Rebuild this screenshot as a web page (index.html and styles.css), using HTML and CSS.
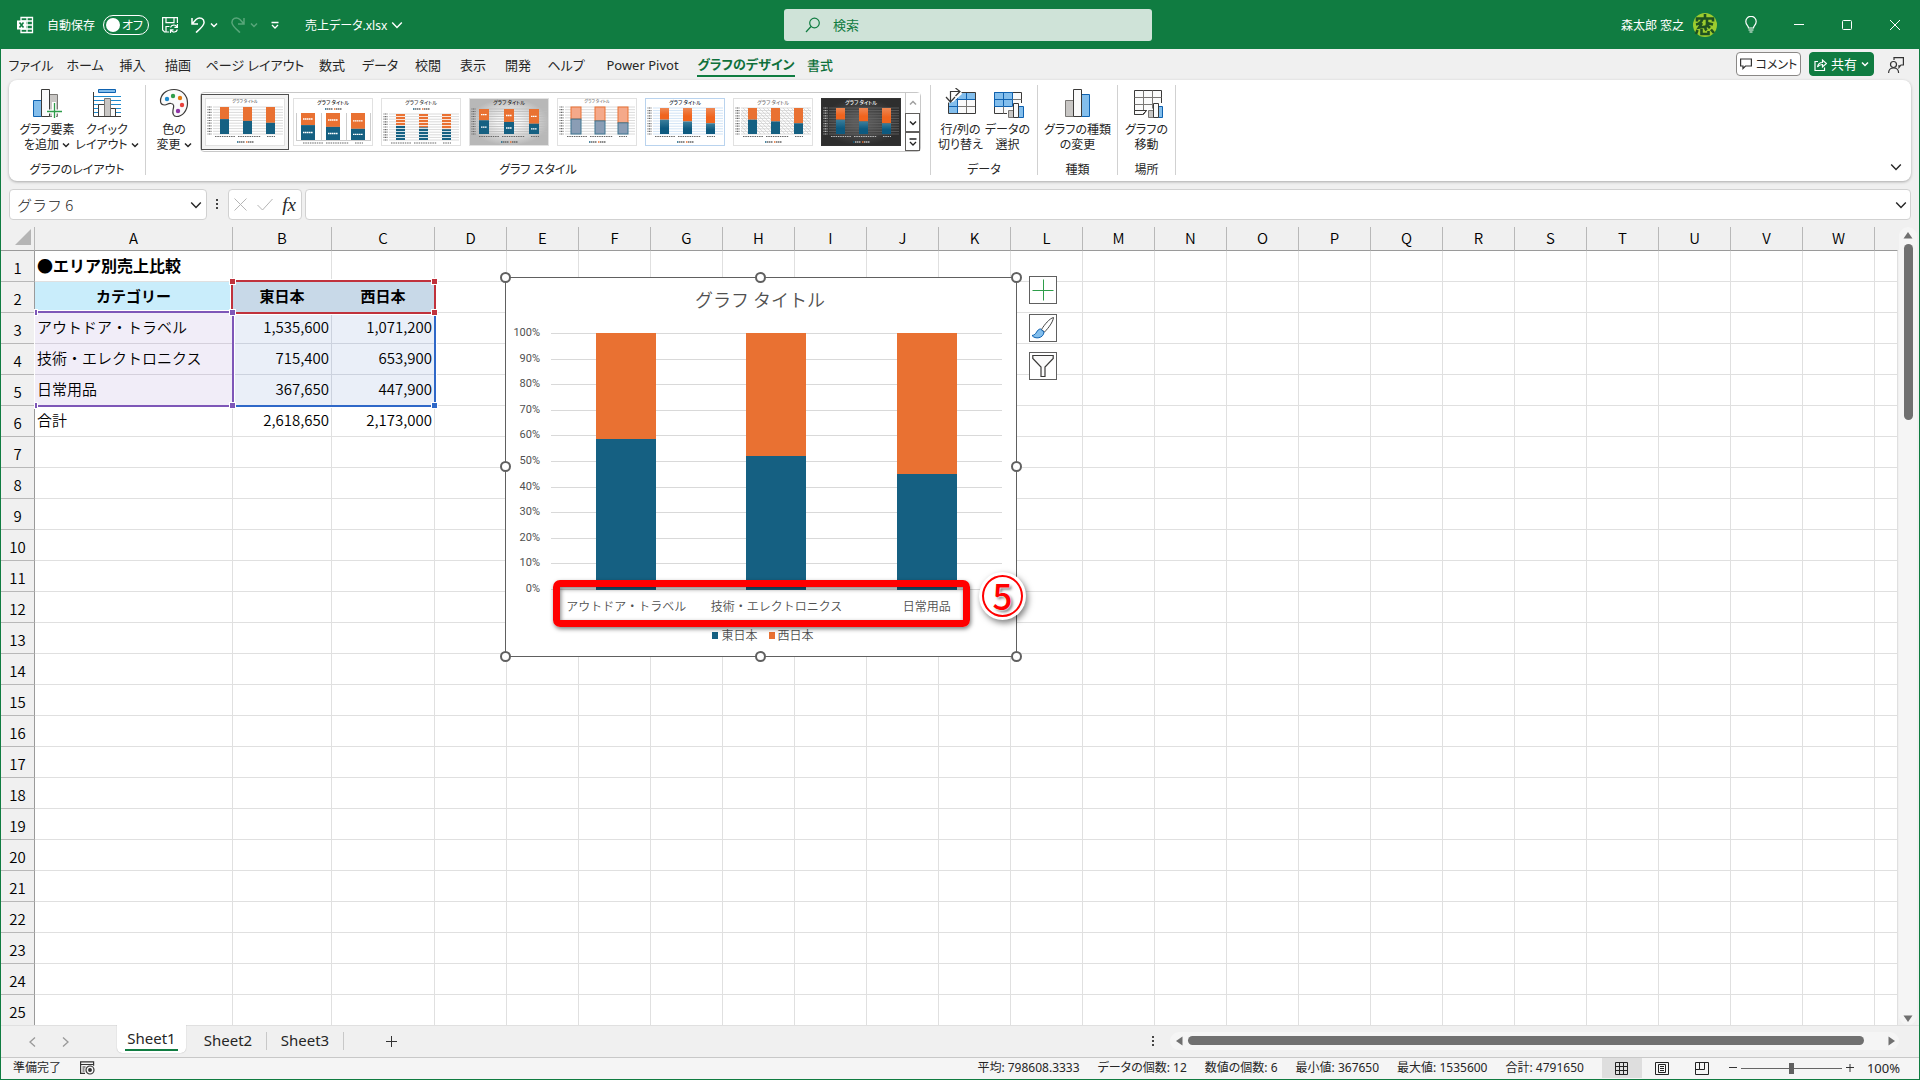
FILE: index.html
```html
<!DOCTYPE html>
<html lang="ja">
<head>
  <meta charset="UTF-8">
  <meta name="viewport" content="width=device-width, initial-scale=1.0">
  <title>売上データ.xlsx - Excel</title>
  <link rel="stylesheet" href="styles.css">
</head>
<body>
  <svg class="defs" width="0" height="0" aria-hidden="true">
    <symbol id="chev" viewBox="0 0 10 10"><path d="M1 3l4 4 4-4" fill="none" stroke="currentColor" stroke-width="1.2"/></symbol>
    <symbol id="chev-small" viewBox="0 0 8 8"><path d="M1 2.500l3 3 3-3" fill="none" stroke="currentColor" stroke-width="1.500"/></symbol>
  </svg>

  <header class="titlebar">
    <div class="quick">
      <svg class="excel-icon" viewBox="0 0 18 18" width="18" height="18">
        <path d="M5 1.5h11.5v15H5zM5 5h11.5M5 9h11.5M5 13h11.5M11 1.5v15" fill="none" stroke="#fff" stroke-width="1.3"/>
        <path d="M1 4.500h9v9H1z" fill="#fff"/>
        <path d="M3.500 6.500l4 5M7.500 6.500l-4 5" stroke="#107c41" stroke-width="1.600"/>
      </svg>
      <label class="autosave">自動保存
        <span class="toggle"><input type="checkbox"><span>オフ</span></span>
      </label>
      <button class="plain" aria-label="保存">
        <svg viewBox="0 0 16 16" width="16" height="16" fill="none" stroke="#fff" stroke-width="1.200">
          <path d="M7 15H2.500L.6 13V.6h14.800V6M4 .6v5h8v-5M4 15V9.500h3.500"/>
          <path d="M8.500 10.500a3.500 3.500 0 0 1 6.500-.5M15.400 7v3.300h-3M15.400 12.500a3.500 3.500 0 0 1-6.500.6M8.500 16v-3.200h3"/>
        </svg>
      </button>
      <button class="plain pair" aria-label="元に戻す">
        <svg viewBox="0 0 14 16" width="14" height="16" fill="none" stroke="#fff" stroke-width="1.500"><path d="M1 1v6h6M1 7l4-4.500c4-3.500 8.500-.5 8 3.500-.3 3-3 5-8 9.500"/></svg>
        <svg width="8" height="8"><use href="#chev-small"/></svg>
      </button>
      <button class="plain pair dim" aria-label="やり直し">
        <svg viewBox="0 0 14 16" width="14" height="16" fill="none" stroke="currentColor" stroke-width="1.500"><path d="M13 1v6H7M13 7L9 2.500C5 -1 .5 2 1 6c.3 3 3 5 8 9.500"/></svg>
        <svg width="8" height="8"><use href="#chev-small"/></svg>
      </button>
      <button class="plain" aria-label="カスタマイズ">
        <svg viewBox="0 0 8 8" width="8" height="8" fill="none" stroke="#fff" stroke-width="1.300"><path d="M.5 1.500h7M1 4l3 3 3-3"/></svg>
      </button>
      <button class="plain filename">売上データ.xlsx <svg width="12" height="12"><use href="#chev"/></svg></button>
    </div>
    <label class="search">
      <svg viewBox="0 0 16 16" width="16" height="16" fill="none" stroke="#107c41" stroke-width="1.200"><circle cx="9.500" cy="6" r="4.800"/><path d="M6 9.500L1 15"/></svg>
      <input type="text" placeholder="検索" aria-label="検索">
    </label>
    <div class="account">
      <span>森太郎 窓之</span>
      <svg class="avatar" viewBox="0 0 24 24" width="24" height="24">
        <circle cx="12" cy="12" r="12" fill="#9ccc2e"/>
        <path d="M3 5.500h18M12 1v4M4 5v3.500M20 5v3.500M9.500 6C8 10 6 11 3 11.500M14 6v4l6 1.500M9 10l-3 4.500 8-1M13 11l4 4M4.500 17l-1.500 4M8.500 16v5h7v-3M12 15l1.500 2.500M18 16.500l3 3.500" fill="none" stroke="#1e5121" stroke-width="2.600"/>
      </svg>
      <button class="win" aria-label="ヒント"><svg viewBox="0 0 12 17" width="12" height="17" fill="none" stroke="#fff" stroke-width="1.200"><path d="M3.500 12C3.500 9.500.8 9 .8 5.500a5.200 5.200 0 0 1 10.400 0C11.200 9 8.500 9.500 8.500 12zM3.500 14h5M4.500 16h3"/></svg></button>
      <button class="win" aria-label="最小化"><svg width="10" height="10" stroke="#fff"><path d="M0 4.500h10"/></svg></button>
      <button class="win" aria-label="最大化"><svg width="10" height="10" fill="none" stroke="#fff"><rect x=".5" y=".5" width="9" height="9" rx="1"/></svg></button>
      <button class="win" aria-label="閉じる"><svg width="10" height="10" stroke="#fff"><path d="M0 0l10 10M10 0L0 10"/></svg></button>
    </div>
  </header>

  <div class="tabrow">
    <nav class="tabs">
      <a href="#">ファイル</a><a href="#">ホーム</a><a href="#">挿入</a><a href="#">描画</a><a href="#">ページ レイアウト</a><a href="#">数式</a><a href="#">データ</a><a href="#">校閲</a><a href="#">表示</a><a href="#">開発</a><a href="#">ヘルプ</a><a href="#">Power Pivot</a><a href="#" class="active">グラフのデザイン</a><a href="#" class="context">書式</a>
    </nav>
    <div class="tab-actions">
      <button class="comment">
        <svg viewBox="0 0 12 12" width="12" height="12" fill="none" stroke="#333" stroke-width="1.200"><path d="M.6 1h10.800v7H5.500L3 10.500V8H.6z"/></svg>
        コメント
      </button>
      <button class="share">
        <svg viewBox="0 0 13 13" width="13" height="13" fill="none" stroke="#fff" stroke-width="1.200"><path d="M4 3.500H1v9h9.500v-3M3.500 9c.5-3 2-4.500 5-4.500V2l4 3.500-4 3.500V6.500C6 6.500 5 7 3.500 9z"/></svg>
        共有
        <svg width="8" height="8"><use href="#chev-small"/></svg>
      </button>
      <button class="plain person" aria-label="プレゼンス">
        <svg viewBox="0 0 16 16" width="16" height="16" fill="none" stroke="#333" stroke-width="1.200"><circle cx="5.500" cy="7.500" r="3"/><path d="M.6 16c0-3 2-5 5-5s5 2 5 5M6 3V.6h9.400V8H13l-2 2.500V8"/></svg>
      </button>
    </div>
  </div>

  <section class="ribbon">
    <div class="group">
      <div class="items layout-items">
        <button class="big">
          <svg viewBox="0 0 30 30" width="30" height="30">
            <path d="M1.500 12.500h8v16h-8z" fill="#83beec" stroke="#0f62b0"/>
            <path d="M17.500 6.500h8v22h-8z" fill="#c8c6c4" stroke="#797774"/>
            <path d="M9.500 1.500h8v27h-8z" fill="#fafafa" stroke="#3b3a39"/>
            <path d="M22 14v16M14 23.500h16" stroke="#fff" stroke-width="4"/>
            <path d="M22.500 15v15M15 23.500h15" stroke="#2e9d4a" stroke-width="1.300"/>
          </svg>
          <span>グラフ要素<br>を追加 <svg width="8" height="8"><use href="#chev-small"/></svg></span>
        </button>
        <button class="big">
          <svg viewBox="0 0 30 30" width="30" height="30" fill="none">
            <path d="M6.500 1.500h17v3h-17z" fill="#83beec" stroke="#0f62b0"/>
            <path d="M2 8.500h27M2 12.500h27M2 16.500h27M2 20.500h27M2 24.500h27" stroke="#1e8bcd"/>
            <path d="M6.500 16.500h6v12h-6zM18.500 20.500h5v8h-5z" fill="#fafafa" stroke="#3b3a39"/>
            <path d="M12.500 10.500h6v18h-6z" fill="#c8c6c4" stroke="#797774"/>
            <path d="M1.500 4v24.500H29" stroke="#3b3a39"/>
          </svg>
          <span>クイック<br>レイアウト <svg width="8" height="8"><use href="#chev-small"/></svg></span>
        </button>
      </div>
      <h2>グラフのレイアウト</h2>
    </div>

    <div class="group">
      <div class="items">
        <button class="big colors">
          <svg viewBox="0 0 30 30" width="30" height="30">
            <path d="M15 1.500C6.500 1.500 1.500 7 1.500 13c0 2.500 2 4 4.500 4 2 0 3-2 6-1.500 4 .5 2.500 4 2 6.500-.5 3 0 6.500 3.500 6.500 6 0 11-6 11-13.500S23 1.500 15 1.500z" fill="#fafafa" stroke="#3b3a39" stroke-width="1.200"/>
            <circle cx="8" cy="11" r="2.200" fill="#1e8bcd"/><circle cx="14" cy="8" r="2.200" fill="#2e9d4a"/>
            <circle cx="21" cy="10" r="2.200" fill="#e07a10"/><circle cx="23" cy="17" r="2.200" fill="#e8403c"/>
            <circle cx="19" cy="23" r="2.200" fill="#8f35a5"/>
          </svg>
          <span>色の<br>変更 <svg width="8" height="8"><use href="#chev-small"/></svg></span>
        </button>
        <div class="gallery">
          <div class="styles" id="styles"></div>
          <div class="gallery-nav">
            <button disabled aria-label="上へ"><svg class="flip" width="8" height="8"><use href="#chev-small"/></svg></button>
            <button aria-label="下へ"><svg width="8" height="8"><use href="#chev-small"/></svg></button>
            <button aria-label="その他"><svg viewBox="0 0 8 8" width="8" height="8" fill="none" stroke="#222" stroke-width="1.300"><path d="M.5 1h7M1 4l3 3 3-3"/></svg></button>
          </div>
        </div>
      </div>
      <h2>グラフ スタイル</h2>
    </div>

    <div class="group">
      <div class="items data-items">
        <button class="big">
          <svg viewBox="0 0 32 30" width="32" height="30" fill="none">
            <path d="M3.500 4.500h27v21h-27z" fill="#fafafa"/>
            <path d="M3.500 4.500h27v7H12.500v14h-9z" fill="#83beec"/>
            <path d="M12.500 11.500v14M21.500 11.500v14M12.500 18.500h18" stroke="#797774"/>
            <path d="M21.500 4.500v7M3.500 18.500h9M12.500 4.500v21M3.500 11.500h27" stroke="#0f62b0"/>
            <path d="M30.500 4.500v21h-27v-21z" stroke="#3b3a39"/>
            <path d="M0 0h15l2 6-9 8-8 1z" fill="#fff"/>
            <path d="M15 3.500H5.500V14M10.500 0l4.500 3.500L10.500 8M1 9l4.500 5L10 9" stroke="#3b3a39" stroke-width="1.200"/>
          </svg>
          <span>行/列の<br>切り替え</span>
        </button>
        <button class="big">
          <svg viewBox="0 0 32 30" width="32" height="30" fill="none">
            <path d="M2.500 4.500h27v21h-27z" fill="#fafafa" stroke="#3b3a39"/>
            <path d="M2.500 4.500h18v14h-18z" fill="#83beec"/>
            <path d="M2.500 11.500h18M11.500 4.500v14M20.500 4.500v14h-18v-14h18" stroke="#0f62b0"/>
            <path d="M20.500 11.500h9M11.500 18.500v7M20.500 18.500h9" stroke="#797774"/>
            <path d="M15 21h6v-6h11v15H15z" fill="#fff"/>
            <path d="M16.500 22.500h5v7h-5z" fill="#c8c6c4" stroke="#797774"/>
            <path d="M26.500 18.500h5v11h-5z" fill="#83beec" stroke="#0f62b0"/>
            <path d="M21.500 15.500h5v14h-5z" fill="#fafafa" stroke="#3b3a39"/>
          </svg>
          <span>データの<br>選択</span>
        </button>
      </div>
      <h2>データ</h2>
    </div>

    <div class="group">
      <div class="items type-items">
        <button class="big">
          <svg viewBox="0 0 30 30" width="30" height="30">
            <path d="M2.500 12.500h8v16h-8z" fill="#c8c6c4" stroke="#797774"/>
            <path d="M18.500 6.500h8v22h-8z" fill="#83beec" stroke="#0f62b0"/>
            <path d="M10.500 1.500h8v27h-8z" fill="#fafafa" stroke="#3b3a39"/>
          </svg>
          <span>グラフの種類<br>の変更</span>
        </button>
      </div>
      <h2>種類</h2>
    </div>

    <div class="group">
      <div class="items move-items">
        <button class="big">
          <svg viewBox="0 0 32 30" width="32" height="30" fill="none">
            <path d="M3.500 2.500h27v18l-15 2-3 4h-9z" fill="#fafafa" stroke="#3b3a39"/>
            <path d="M3.500 9.500h27M3.500 16.500h27M12.500 2.500v20M21.500 2.500v18" stroke="#797774"/>
            <path d="M3.500 22.500h12l-4 4h-8z" fill="#fafafa" stroke="#3b3a39"/>
            <path d="M16 21h6v-6h10v15H16z" fill="#fff"/>
            <path d="M17.500 22.500h5v7h-5z" fill="#c8c6c4" stroke="#797774"/>
            <path d="M27.500 18.500h4v11h-4z" fill="#83beec" stroke="#0f62b0"/>
            <path d="M22.500 15.500h5v14h-5z" fill="#fafafa" stroke="#3b3a39"/>
          </svg>
          <span>グラフの<br>移動</span>
        </button>
      </div>
      <h2>場所</h2>
    </div>
    <button class="plain collapse" aria-label="リボンを折りたたむ"><svg width="12" height="12"><use href="#chev"/></svg></button>
  </section>

  <div class="formula-row">
    <div class="box namebox">
      <input type="text" value="グラフ 6" aria-label="名前ボックス">
      <button class="plain dark" aria-label="名前一覧"><svg width="12" height="12"><use href="#chev"/></svg></button>
    </div>
    <svg class="dots" width="3" height="12" fill="#444"><path d="M0 0h2v2H0zM0 4h2v2H0zM0 8h2v2H0z"/></svg>
    <div class="box fx">
      <button class="plain" disabled aria-label="キャンセル"><svg width="13" height="13" stroke="#b5b5b5"><path d="M.5.5l12 12M12.500.5l-12 12"/></svg></button>
      <button class="plain" disabled aria-label="入力"><svg width="16" height="13" fill="none" stroke="#b5b5b5"><path d="M.5 7l5 5 10-11"/></svg></button>
      <button class="plain fx-btn">fx</button>
    </div>
    <div class="box formula">
      <input type="text" aria-label="数式バー">
      <button class="plain dark" aria-label="展開"><svg width="12" height="12"><use href="#chev"/></svg></button>
    </div>
  </div>

  <main class="sheet">
    <div class="grid-area">
      <table class="cells" id="cells"></table>

      <div class="range range-name"><i class="tl"></i><i class="bl"></i></div>
      <div class="range range-data"><i class="br"></i></div>
      <div class="range range-head"><i class="tl"></i><i class="tr"></i><i class="br"></i></div>
      <div class="range-corners"><i class="tr"></i><i class="br"></i></div>

      <figure class="chart">
        <figcaption>グラフ タイトル</figcaption>
        <div class="plot-row">
          <ul class="axis" id="axis"></ul>
          <div class="plot">
            <div class="lines" id="lines"></div>
            <div class="bars" id="bars"></div>
          </div>
        </div>
        <div class="categories" id="categories"></div>
        <div class="legend"><span class="east">東日本</span><span class="west">西日本</span></div>
        <i class="handle n w"></i><i class="handle n c"></i><i class="handle n e"></i>
        <i class="handle m w"></i><i class="handle m e"></i>
        <i class="handle s w"></i><i class="handle s c"></i><i class="handle s e"></i>
      </figure>

      <div class="chart-tools">
        <button aria-label="グラフ要素"><svg width="22" height="24" stroke="#2e9d4a"><path d="M11.500 1.500v21M.5 12.500h21"/></svg></button>
        <button aria-label="グラフ スタイル">
          <svg viewBox="0 0 24 24" width="24" height="24"><path d="M22.500 1.500c-4 1-9 7-12 12l3 2.500c4-4 8.500-10 9-14.500z" fill="#fff" stroke="#444"/><path d="M9.500 13c-4 0-3.500 6-8.500 6.500 3 4 11.500 3 12-3.500z" fill="#83beec" stroke="#0f62b0"/></svg>
        </button>
        <button aria-label="グラフ フィルター">
          <svg viewBox="0 0 22 24" width="22" height="24"><path d="M.8 1.500h20.400v3L13 13v9.500H9V13L.8 4.500z" fill="#fafafa" stroke="#3b3a39" stroke-width="1.200"/></svg>
        </button>
      </div>

      <div class="callout"></div>
      <div class="badge">5</div>
    </div>
    <div class="vscroll">
      <svg width="10" height="7" fill="#707070"><path d="M5 0l4.500 6.500h-9z"/></svg>
      <div class="vthumb"></div>
      <svg class="down" width="10" height="7" fill="#707070"><path d="M5 7L.5.5h9z"/></svg>
    </div>
  </main>

  <div class="sheetbar">
    <div class="sheet-nav">
      <button class="plain" aria-label="前のシート"><svg width="7" height="10" fill="none" stroke="#999" stroke-width="1.300"><path d="M6 .5L1 5l5 4.500"/></svg></button>
      <button class="plain" aria-label="次のシート"><svg width="7" height="10" fill="none" stroke="#999" stroke-width="1.300"><path d="M1 .5L6 5 1 9.500"/></svg></button>
    </div>
    <nav class="sheet-tabs">
      <a href="#" class="active"><span>Sheet1</span></a><a href="#">Sheet2</a><a href="#">Sheet3</a>
    </nav>
    <button class="plain add" aria-label="新しいシート"><svg width="11" height="11" stroke="#333"><path d="M5.500 0v11M0 5.500h11"/></svg></button>
    <svg class="dots" width="3" height="12" fill="#444"><path d="M0 0h2v2H0zM0 4h2v2H0zM0 8h2v2H0z"/></svg>
    <div class="hscroll">
      <svg width="7" height="10" fill="#707070"><path d="M0 5L6.500.5v9z"/></svg>
      <div class="hthumb"></div>
      <svg width="7" height="10" fill="#707070"><path d="M7 5L.5.5v9z"/></svg>
    </div>
  </div>

  <footer class="status">
    <span>準備完了</span>
    <svg class="macro" viewBox="0 0 15 14" width="15" height="14" fill="none" stroke="#333" stroke-width="1.200"><path d="M5 12.400H.6V.8h13v4M.6 3.500h13M2.500 6h3M2.500 8h2M2.500 10h2"/><circle cx="10" cy="9" r="4"/><circle cx="10" cy="9" r="1.300" fill="#333"/></svg>
    <div class="stats">
      <span>平均: 798608.3333</span><span>データの個数: 12</span><span>数値の個数: 6</span><span>最小値: 367650</span><span>最大値: 1535600</span><span>合計: 4791650</span>
    </div>
    <div class="views">
      <button class="on" aria-label="標準"><svg width="13" height="13" fill="none" stroke="#222"><path d="M.5.5h12v12H.5zM.5 4.500h12M.5 8.500h12M4.500.5v12M8.500.5v12"/></svg></button>
      <button aria-label="ページ レイアウト"><svg width="14" height="13" fill="none" stroke="#222"><path d="M.5.5h13v12H.5zM3.500 2.500h7v8h-7zM5 4.500h4M5 6.500h4M5 8.500h4"/></svg></button>
      <button aria-label="改ページ プレビュー"><svg width="14" height="13" fill="none" stroke="#222"><path d="M.5 12.500V.5h13v12H.5M4.500.5v7h5v-7M4.500 7.500H.5"/></svg></button>
    </div>
    <div class="zoom">
      <button class="plain" aria-label="縮小"><svg width="8" height="8" stroke="#333"><path d="M0 3.500h8"/></svg></button>
      <input type="range" min="0" max="100" value="50" aria-label="ズーム">
      <button class="plain" aria-label="拡大"><svg width="8" height="8" stroke="#333"><path d="M0 3.500h8M4 0v8"/></svg></button>
      <span>100%</span>
    </div>
  </footer>

  <script src="script.js"></script>
</body>
</html>
```
FILE: styles.css
```css
* {
  box-sizing: border-box;
}

body {
  display: flex;
  flex-direction: column;
  height: 100vh;
  margin: 0;
  border: solid #107c41;
  border-width: 0 1px 1px;
  background: #f0f0f0;
  color: #262626;
  font-family: "Noto Sans", "Noto Sans CJK JP", sans-serif;
  font-size: 12px;
  font-feature-settings: "palt";
  overflow: hidden;
}

button,
input {
  font: inherit;
  font-feature-settings: inherit;
  color: inherit;
}

a {
  color: inherit;
  text-decoration: none;
}

svg {
  flex: none;
}

.defs {
  position: absolute;
}

.plain {
  display: flex;
  align-items: center;
  padding: 0;
  border: 0;
  background: none;
}

/* title bar */
.titlebar {
  display: grid;
  grid-template-columns: 1fr 368px 1fr;
  align-items: center;
  flex: none;
  height: 49px;
  margin: 0 -1px;
  padding-left: 16px;
  background: #107c41;
  color: #fff;
}

.quick {
  display: flex;
  align-items: center;
  gap: 13px;
}

.autosave {
  display: flex;
  align-items: center;
  gap: 8px;
}

.toggle {
  display: flex;
  align-items: center;
  justify-content: space-between;
  width: 46px;
  height: 20px;
  padding: 0 5px 0 2px;
  border: 1px solid #fff;
  border-radius: 10px;
}

.toggle input {
  appearance: none;
  width: 14px;
  height: 14px;
  margin: 0;
  border-radius: 50%;
  background: #fff;
}

.pair {
  gap: 5px;
}

.dim {
  color: #58a67a;
}

.filename {
  gap: 4px;
  margin-left: 13px;
}

.search {
  display: flex;
  align-items: center;
  gap: 12px;
  height: 32px;
  padding-left: 21px;
  border-radius: 3px;
  background: #cfe3d8;
}

.search input {
  flex: 1;
  min-width: 0;
  padding: 0;
  border: 0;
  background: none;
  outline: none;
  font-size: 13px;
}

.search input::placeholder {
  color: #107c41;
}

.account {
  display: flex;
  align-items: center;
  justify-content: flex-end;
  padding-right: 1px;
}

.avatar {
  margin: 0 10px 0 9px;
}

.win {
  display: flex;
  align-items: center;
  justify-content: center;
  width: 48px;
  height: 48px;
  padding: 0;
  border: 0;
  background: none;
}

/* ribbon tabs */
.tabrow {
  display: flex;
  justify-content: space-between;
  flex: none;
  height: 31px;
  padding: 0 15px 0 1px;
}

.tabs {
  display: grid;
  grid-template-columns: 58px 50px 45px 46px 108px 46px 50px 46px 44px 46px 50px 103px 104px 44px;
  font-size: 13px;
  line-height: 22px;
}

.tabs a {
  justify-self: center;
  align-self: start;
  margin-top: 5px;
  white-space: nowrap;
}

.tabs .active {
  border-bottom: 2px solid #107c41;
  color: #0f703b;
  font-weight: bold;
  line-height: 21px;
}

.tabs .context {
  color: #0f703b;
  font-weight: 500;
}

.tab-actions {
  display: flex;
  align-items: center;
  gap: 8px;
}

.comment,
.share {
  display: flex;
  align-items: center;
  justify-content: center;
  gap: 4px;
  width: 65px;
  height: 24px;
  margin-bottom: 1px;
  padding: 0;
  border: 1px solid #8a8886;
  border-radius: 4px;
  background: #fff;
  white-space: nowrap;
}

.share {
  border-color: #107c41;
  background: #107c41;
  color: #fff;
  font-size: 13px;
  line-height: 18px;
}

.person {
  margin-left: 6px;
}

/* ribbon */
.ribbon {
  display: flex;
  flex: none;
  height: 101px;
  margin: 0 8px;
  border-radius: 8px;
  background: #fff;
  box-shadow: 0 1px 3px rgba(0, 0, 0, 0.3);
}

.group {
  display: flex;
  flex-direction: column;
  align-items: center;
  justify-content: space-between;
  height: 90px;
  margin-top: 5px;
  border-right: 1px solid #d1d1d1;
}

.items {
  display: flex;
  padding: 3px 9px 0 2px;
}

.layout-items {
  padding: 3px 8px 0;
}

.layout-items .big {
  width: 60px;
}

.data-items {
  padding: 3px 6px 0;
}

.data-items .big {
  width: 47px;
}

.type-items,
.move-items {
  padding: 3px 0 0;
}

.type-items .big {
  width: 79px;
}

.move-items .big {
  width: 57px;
}

.colors {
  width: 52px;
}

.group h2 {
  margin: 0;
  font-size: 12px;
  font-weight: normal;
  line-height: 10px;
}

.big {
  display: flex;
  flex-direction: column;
  align-items: center;
  gap: 4px;
  padding: 0;
  border: 0;
  background: none;
  line-height: 15px;
  white-space: nowrap;
}

.gallery {
  display: flex;
  align-self: flex-start;
  height: 60px;
  margin-top: 4px;
  border: 1px solid #c8c8c8;
  border-radius: 4px;
}

.styles {
  display: flex;
  padding: 1px 0;
}

.styles button {
  display: flex;
  align-items: center;
  justify-content: center;
  width: 88px;
  height: 56px;
  padding: 0;
  border: 0;
  background: none;
}

.styles .selected {
  border: 1px solid #505050;
  background: #f4f4f4;
}

.gallery-nav {
  display: grid;
  grid-template-rows: 20px 19px 19px;
  width: 15px;
}

.gallery-nav button {
  display: flex;
  align-items: center;
  justify-content: center;
  padding: 0;
  border: 1px solid #605e5c;
  background: #fff;
}

.gallery-nav button:first-child {
  border: 0;
  border-left: 1px solid #c8c8c8;
  color: #a0a0a0;
}

.flip {
  transform: rotate(180deg);
}

.collapse {
  align-self: flex-end;
  margin: 0 9px 8px auto;
}

/* formula bar */
.formula-row {
  display: flex;
  flex: none;
  height: 46px;
  padding: 8px 8px 7px;
}

.box {
  display: flex;
  align-items: center;
  border: 1px solid #d1d1d1;
  border-radius: 4px;
  background: #fff;
}

.box input {
  flex: 1;
  min-width: 0;
  border: 0;
  outline: none;
  background: none;
  font-family: "Noto Sans CJK JP", sans-serif;
  font-size: 15px;
  font-weight: 300;
  font-feature-settings: normal;
}

.namebox {
  width: 198px;
  padding: 0 4px 0 5px;
}

.dots {
  align-self: center;
  margin: 0 9px;
}

.fx {
  justify-content: space-between;
  width: 74px;
  padding: 0 5px;
}

.fx-btn {
  font-family: "Liberation Serif", serif;
  font-size: 19px;
  font-style: italic;
}

.formula {
  flex: 1;
  margin-left: 3px;
  padding: 0 3px;
}

/* worksheet */
.sheet {
  display: flex;
  flex: 1;
  min-height: 0;
}

.grid-area {
  position: relative;
  flex: 1;
  overflow: hidden;
  font-family: "Noto Sans CJK JP", sans-serif;
  font-feature-settings: normal;
}

.cells {
  width: 100%;
  table-layout: fixed;
  border-collapse: separate;
  border-spacing: 0;
  background: #fff;
  color: #000;
  font-size: 15px;
  line-height: 20px;
}

.cells th,
.cells td {
  height: 31px;
  padding: 0 2px 2px;
  border: solid #e0e0e0;
  border-width: 0 1px 1px 0;
  text-align: left;
  white-space: nowrap;
  font-weight: 350;
}

.cells thead th {
  height: 24px;
  padding: 0 0 2px;
  border-right: 1px solid #b8b8b8;
  border-bottom-color: #9a9a9a;
  background: #f0f0f0;
  text-align: center;
}

.cells thead th:last-child {
  border-right-color: #f0f0f0;
}

.cells tbody th {
  padding: 4px 0 0;
  border-right-color: #9a9a9a;
  border-bottom-color: #b8b8b8;
  background: #f0f0f0;
  text-align: center;
}

.cells .corner {
  padding-right: 3px;
  text-align: right;
  line-height: 0;
  vertical-align: bottom;
}

.col-row { width: 34px; }
.col-a { width: 198px; }
.col-b { width: 99px; }
.col-c { width: 103px; }
.col { width: 72px; }

.cells .num {
  text-align: right;
}

.cells .title,
.cells .label,
.cells .head {
  font-weight: bold;
}

.cells .title {
  font-size: 16px;
}

.cells .label {
  border-color: #c9edfb;
  background: #c9edfb;
  text-align: center;
}

.cells .head {
  border-color: #c8d9e8;
  background: #c8d9e8;
  text-align: center;
}

.cells .names {
  border-color: #d5d0dc;
  background: #f1edf8;
}

.cells .values {
  border-color: #ccd2de;
  background: #eaeff8;
}

/* coloured source ranges of the selected chart */
.range,
.range-corners {
  position: absolute;
  border: 2px solid;
  outline: 1px solid #fff;
}

.range i,
.range-corners i {
  position: absolute;
  width: 5px;
  height: 5px;
  background: currentColor;
  outline: 1px solid #fff;
}

.range-name {
  top: 84px;
  left: 34px;
  width: 199px;
  height: 96px;
  border-left: 0;
  color: #7e57b8;
}

.range-data {
  top: 84px;
  left: 231px;
  width: 204px;
  height: 96px;
  border-left: 0;
  color: #2f68c8;
  clip-path: inset(3px -4px -4px 3px);
}

.range-head {
  top: 53px;
  left: 230px;
  width: 205px;
  height: 34px;
  color: #c0323c;
}

.range-corners {
  top: 84px;
  left: 34px;
  width: 199px;
  height: 96px;
  border-color: transparent;
  outline: 0;
  color: #7e57b8;
}

.range i { top: -3px; left: -3px; }
.range-corners i { top: -3px; right: -3px; }
.range .tr { left: auto; right: -3px; }
.range .bl { top: auto; bottom: -3px; }
.range .br { top: auto; bottom: -3px; left: auto; right: -3px; }
.range-corners .br { top: auto; bottom: -3px; }
.range-name i { left: 0; width: 2px; }

/* embedded chart */
.chart {
  position: absolute;
  top: 50px;
  left: 504px;
  display: flex;
  flex-direction: column;
  width: 512px;
  margin: 0;
  padding: 9px 14px 12px 0;
  border: 1px solid #606060;
  background: #fff;
  color: #505050;
  font-size: 12px;
  font-weight: 350;
  line-height: 18px;
}

.chart figcaption {
  padding-left: 12px;
  font-size: 18px;
  line-height: 24px;
  text-align: center;
}

.plot-row {
  display: flex;
  gap: 11px;
  height: 257px;
  margin-top: 22px;
}

.axis {
  display: flex;
  flex-direction: column;
  justify-content: space-between;
  width: 34px;
  margin: -7px 0 -5px;
  padding: 0;
  list-style: none;
  font-family: Roboto, sans-serif;
  font-size: 11px;
  font-weight: 400;
  line-height: 13px;
  text-align: right;
}

.plot {
  display: grid;
  flex: 1;
}

.lines,
.bars {
  grid-area: 1 / 1;
}

.lines {
  display: flex;
  flex-direction: column;
  justify-content: space-between;
}

.lines i {
  height: 1px;
  background: #d9d9d9;
}

.bars {
  display: grid;
  grid-template-columns: repeat(3, 1fr);
  justify-items: center;
}

.bar {
  display: flex;
  flex-direction: column;
  justify-content: flex-end;
  width: 60px;
  background: #e97132;
}

.bar div {
  background: #156082;
}

.categories {
  display: grid;
  grid-template-columns: repeat(3, 1fr);
  margin: 7px 0 11px 45px;
  text-align: center;
}

.legend {
  display: flex;
  justify-content: center;
  gap: 11px;
  padding-left: 18px;
}

.legend span {
  display: flex;
  align-items: center;
  gap: 3px;
}

.legend span::before {
  content: "";
  width: 6px;
  height: 7px;
  background: #156082;
}

.legend .west::before {
  background: #e97132;
}

.handle {
  position: absolute;
  width: 11px;
  height: 11px;
  border: 2px solid #606060;
  border-radius: 50%;
  background: #fff;
}

.n { top: -6px; }
.m { top: calc(50% - 6px); }
.s { bottom: -6px; }
.w { left: -6px; }
.c { left: calc(50% - 6px); }
.e { right: -6px; }

.chart-tools {
  position: absolute;
  top: 49px;
  left: 1028px;
  display: flex;
  flex-direction: column;
  gap: 10px;
}

.chart-tools button {
  display: flex;
  align-items: center;
  justify-content: center;
  width: 28px;
  height: 28px;
  padding: 0;
  border: 1px solid #606060;
  background: #fff;
}

.callout {
  position: absolute;
  top: 353px;
  left: 552px;
  width: 417px;
  height: 47px;
  border: 7px solid #f00;
  border-radius: 7px;
  box-shadow: 1px 2px 4px rgba(0, 0, 0, 0.5), inset 1px 2px 4px rgba(0, 0, 0, 0.5);
}

.badge {
  position: absolute;
  top: 348px;
  left: 981px;
  width: 41px;
  height: 42px;
  border: 2px solid #f00;
  border-radius: 50%;
  background: #fff;
  box-shadow: 0 0 0 3px #fff, 2px 3px 6px 3px rgba(0, 0, 0, 0.5);
  color: #f00;
  font-family: "Noto Sans CJK JP", sans-serif;
  font-size: 35px;
  font-weight: 500;
  line-height: 36px;
  text-align: center;
  text-shadow: 0 0 2px #fff, 0 0 2px #fff, 2px 2px 3px #777;
}

.vscroll {
  display: flex;
  flex-direction: column;
  align-items: center;
  width: 18px;
  margin: 0 2px 0 1px;
  padding: 5px 0 3px;
  border-radius: 9px;
  background: #f5f5f5;
}

.vthumb {
  width: 9px;
  height: 176px;
  margin: 5px 0 auto;
  border-radius: 5px;
  background: #707070;
}

/* sheet tabs */
.sheetbar {
  display: flex;
  align-items: center;
  flex: none;
  height: 32px;
  border-top: 1px solid #e0e0e0;
}

.sheet-nav {
  display: flex;
  gap: 26px;
  width: 116px;
  padding-left: 28px;
}

.sheet-tabs {
  display: flex;
  align-self: flex-start;
  font-size: 15px;
  line-height: 17px;
}

.sheet-tabs a {
  width: 77px;
  height: 18px;
  margin-top: 6px;
  border-right: 1px solid #c8c8c8;
  text-align: center;
}

.sheet-tabs .active {
  width: 69px;
  height: 28px;
  margin: -1px 4px 0 0;
  padding: 5px 8px 0;
  border: 0;
  border-radius: 0 0 5px 5px;
  background: #fff;
  box-shadow: 0 0 1px #999;
}

.active span {
  display: block;
  padding-bottom: 2px;
  border-bottom: 2px solid #107c41;
}

.add {
  margin: 0 auto 0 42px;
}

.sheetbar .dots {
  margin: 0 15px 0 0;
}

.hscroll {
  display: flex;
  align-items: center;
  gap: 5px;
  width: 38%;
  height: 18px;
  margin: 0 20px 2px 0;
  padding: 0 4px 0 6px;
  border-radius: 9px;
  background: #f5f5f5;
}

.hthumb {
  flex: 1;
  height: 9px;
  margin-right: 19px;
  border-radius: 5px;
  background: #707070;
}

/* status bar */
.status {
  display: flex;
  align-items: center;
  flex: none;
  height: 22px;
  padding: 0 19px 1px 12px;
  border-top: 1px solid #c8c8c8;
  background: #f5f5f5;
  line-height: 20px;
}

.macro {
  margin-left: 19px;
}

.stats {
  display: flex;
  gap: 18px;
  margin: 0 18px 0 auto;
}

.views {
  display: flex;
  align-self: stretch;
}

.views button {
  display: flex;
  align-items: center;
  justify-content: center;
  width: 40px;
  padding: 0;
  border: 0;
  background: none;
}

.views .on {
  background: #dedede;
}

.zoom {
  display: flex;
  align-items: center;
  gap: 4px;
  margin-left: 7px;
}

.zoom input {
  appearance: none;
  width: 101px;
  height: 20px;
  margin: 0;
  background: linear-gradient(#666, #666) center / 100% 1px no-repeat;
}

.zoom input::-webkit-slider-thumb {
  appearance: none;
  width: 5px;
  height: 11px;
  background: #606060;
}

.zoom span {
  margin-left: 9px;
  font-size: 13px;
}
```
FILE: script.js
```js
const ROWS = 25;
const letters = "ABCDEFGHIJKLMNOPQRSTUVW".split("");

const cells = {
  A1: ["●エリア別売上比較", "title"],
  A2: ["カテゴリー", "label"],
  B2: ["東日本", "head"],
  C2: ["西日本", "head"],
  A3: ["アウトドア・トラベル", "names"],
  B3: ["1,535,600", "num values"],
  C3: ["1,071,200", "num values"],
  A4: ["技術・エレクトロニクス", "names"],
  B4: ["715,400", "num values"],
  C4: ["653,900", "num values"],
  A5: ["日常用品", "names"],
  B5: ["367,650", "num values"],
  C5: ["447,900", "num values"],
  A6: ["合計", ""],
  B6: ["2,618,650", "num"],
  C6: ["2,173,000", "num"]
};

// worksheet
let cols = '<col class="col-row"><col class="col-a"><col class="col-b"><col class="col-c">';
cols += '<col class="col">'.repeat(letters.length - 3) + "<col>";

let html = `<colgroup>${cols}</colgroup><thead><tr>
  <th class="corner"><svg width="16" height="20"><path d="M16 1v16H0z" fill="#b5b5b5"/></svg></th>`;
letters.forEach(l => { html += `<th>${l}</th>`; });
html += "<th></th></tr></thead><tbody>";

for (let r = 1; r <= ROWS; r++) {
  html += `<tr><th>${r}</th>`;
  letters.forEach(l => {
    const c = cells[l + r];
    html += c ? `<td class="${c[1]}">${c[0]}</td>` : "<td></td>";
  });
  html += "<td></td></tr>";
}
document.getElementById("cells").innerHTML = html + "</tbody>";

// chart
const series = [
  { name: "アウトドア・トラベル", east: 1535600, west: 1071200 },
  { name: "技術・エレクトロニクス", east: 715400, west: 653900 },
  { name: "日常用品", east: 367650, west: 447900 }
];
const shares = series.map(s => s.east / (s.east + s.west));

let axis = "";
for (let p = 100; p >= 0; p -= 10) axis += `<li>${p}%</li>`;
document.getElementById("axis").innerHTML = axis;
document.getElementById("lines").innerHTML = "<i></i>".repeat(11);
document.getElementById("bars").innerHTML = shares
  .map(v => `<div class="bar"><div style="height: ${(v * 100).toFixed(1)}%"></div></div>`).join("");
document.getElementById("categories").innerHTML = series.map(s => `<span>${s.name}</span>`).join("");

// chart style gallery
const styles = [
  { top: 9, bottom: 36, title: "#666" },
  { top: 15, bottom: 42, title: "#222", xs: [8, 33, 58], w: 14, labels: true, legendTop: true, noLines: true },
  { top: 16, bottom: 42, title: "#444", legendTop: true, stripes: true },
  { top: 11, bottom: 36, title: "#222", bg: "url(#grayBg)", xs: [10, 35, 60], w: 10, labels: true, line: "#bbb" },
  { top: 9, bottom: 36, title: "#777", xs: [14, 38, 61], w: 10, pastel: true },
  { top: 10, bottom: 36, title: "#123", edge: "#b9d3ee", line: "#c5dcf2", gradient: true },
  { top: 10, bottom: 36, title: "#777", hatch: true },
  { top: 10, bottom: 36, title: "#fff", bg: "url(#darkBg)", edge: "#333", line: "#666", ink: "#bbb", gradient: true }
];

const defs = `<defs>
  <radialGradient id="grayBg"><stop offset="0.3" stop-color="#f5f5f5"/><stop offset="1" stop-color="#b8b8b8"/></radialGradient>
  <radialGradient id="darkBg"><stop offset="0.2" stop-color="#5a5a5a"/><stop offset="1" stop-color="#2e2e2e"/></radialGradient>
  <linearGradient id="eastG" x2="0" y2="1"><stop stop-color="#3c7f9c"/><stop offset="0.6" stop-color="#0d5a80"/></linearGradient>
  <linearGradient id="westG" x2="0" y2="1"><stop stop-color="#ee8854"/><stop offset="0.6" stop-color="#f0641e"/></linearGradient>
  <pattern id="hatch" width="4" height="4" patternUnits="userSpaceOnUse"><path d="M0 0l4 4" stroke="#ccc" stroke-width="0.7"/></pattern>
</defs>`;

function thumb(s, first) {
  const xs = s.xs || [15, 38, 61];
  const w = s.w || 9;
  const h = s.bottom - s.top;
  const ink = s.ink || "#666";
  let out = `<svg viewBox="0 0 80 48" width="80" height="48">${first ? defs : ""}
    <rect x="0.5" y="0.5" width="79" height="47" fill="${s.bg || "#fff"}" stroke="${s.edge || "#e1e1e1"}"/>`;
  if (s.hatch) out += `<rect x="8" y="${s.top}" width="70" height="${h}" fill="url(#hatch)"/>`;
  if (s.noLines) {
    out += `<path d="M3.5 15v27M28.500 15v27M53.500 15v27M77.500 15v27M3 42.500h75" stroke="#ccc"/>`;
  } else {
    for (let i = 0; i <= 10; i++) {
      const y = s.top + h * i / 10;
      out += `<path d="M8 ${y}h70" stroke="${s.line || "#d0d0d0"}" stroke-width="0.8"/>
        <path d="M2.500 ${y}h4" stroke="${ink}" stroke-width="1.200" stroke-dasharray="1 0.500"/>`;
    }
  }
  xs.forEach((x, i) => {
    const split = s.top + h * (1 - shares[i]) + 1;
    const west = s.gradient ? "url(#westG)" : s.pastel ? "#f4a98a" : "#e97132";
    const east = s.gradient ? "url(#eastG)" : s.pastel ? "#8a9db5" : "#156082";
    out += `<rect x="${x}" y="${s.top}" width="${w}" height="${split - s.top}" fill="${west}"${s.pastel ? ' stroke="#e97132"' : ""}/>
      <rect x="${x}" y="${split}" width="${w}" height="${s.bottom - split}" fill="${east}"${s.pastel ? ' stroke="#3c7590"' : ""}/>`;
    if (s.stripes) {
      for (let y = s.top + 2; y < s.bottom; y += 3) out += `<path d="M${x} ${y}.5h${w}" stroke="#fff" stroke-width="0.8"/>`;
    }
    if (s.labels) {
      out += `<path d="M${x + 2} ${(s.top + split) / 2}h${w - 4}M${x + 2} ${(s.bottom + split) / 2}h${w - 4}" stroke="#fff" stroke-width="1.400" stroke-dasharray="1.500 0.400"/>`;
    }
  });
  const legendY = s.legendTop ? 11 : 44;
  const catY = s.legendTop ? 45 : 38.5;
  out += `<path d="M10 ${catY}h20M33 ${catY}h23M62 ${catY}h8" stroke="${ink}" stroke-width="1.200" stroke-dasharray="1.500 0.800"/>
    <path d="M34 ${legendY}h6M43 ${legendY}h6" stroke="${ink}" stroke-width="1.400" stroke-dasharray="1.500 0.500"/>
    <path d="M32 ${legendY}h1.500" stroke="#156082" stroke-width="1.500"/><path d="M41 ${legendY}h1.500" stroke="#e97132" stroke-width="1.500"/>
    <text x="40" y="${s.top > 9 ? 6 : 5}" text-anchor="middle" font-size="${s.top > 9 ? 5 : 4}" font-weight="500" fill="${s.title}">グラフ タイトル</text></svg>`;
  return out;
}

document.getElementById("styles").innerHTML = styles
  .map((s, i) => `<button aria-label="スタイル ${i + 1}"${i === 0 ? ' class="selected"' : ""}>${thumb(s, i === 0)}</button>`)
  .join("");
```
